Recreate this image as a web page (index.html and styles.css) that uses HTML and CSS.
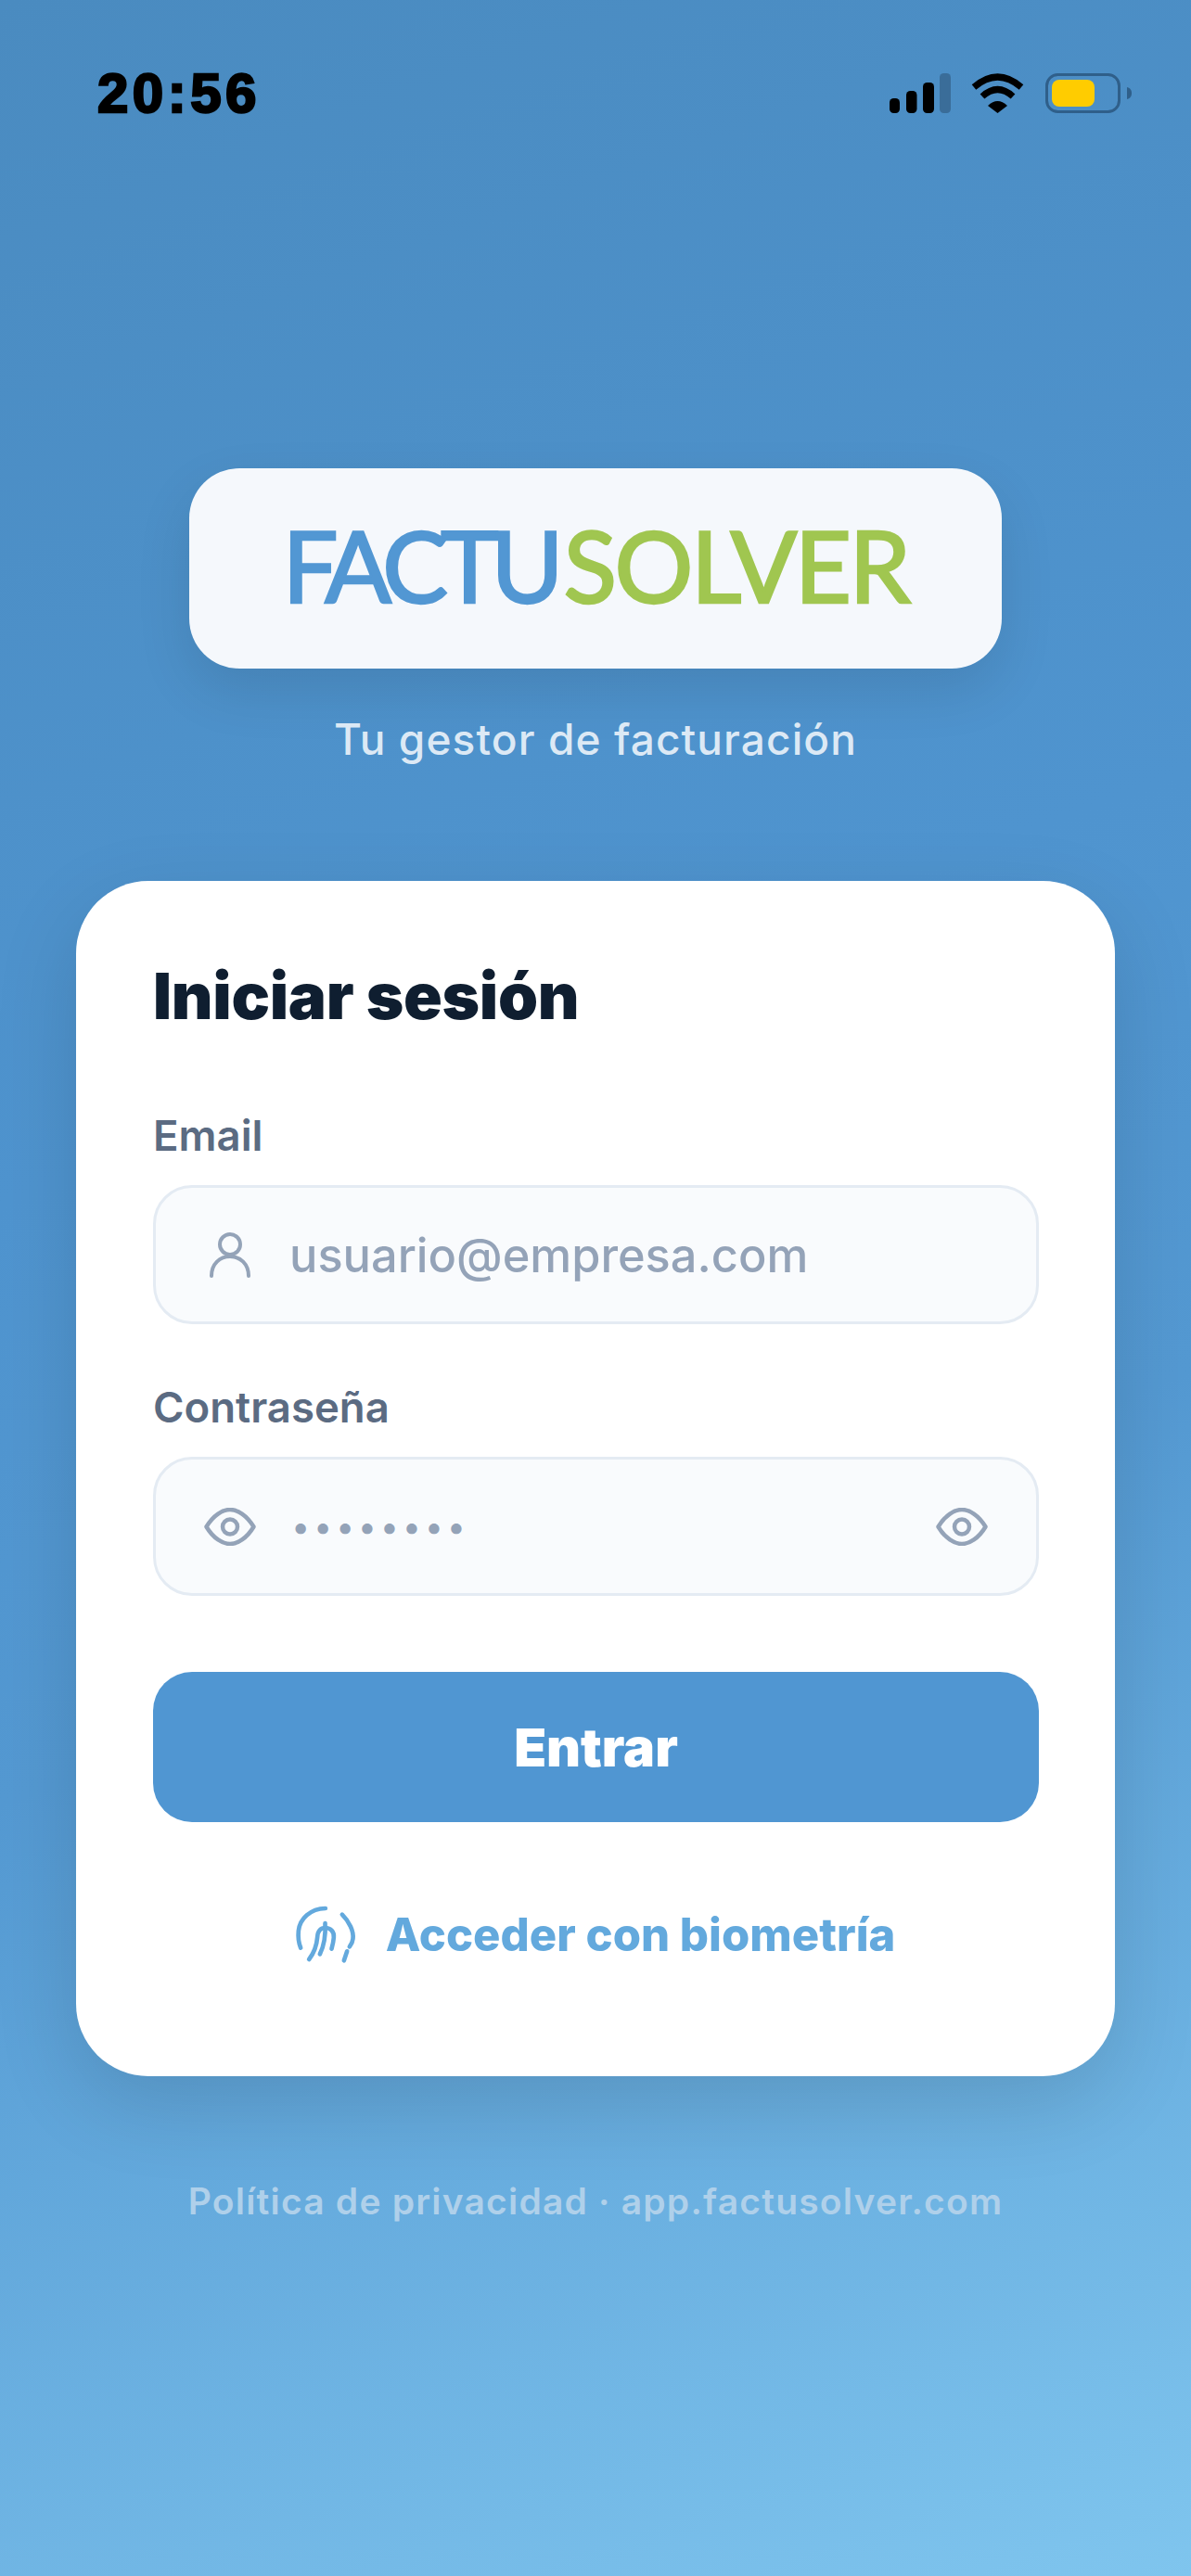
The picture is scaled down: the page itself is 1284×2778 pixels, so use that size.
FILE: index.html
```html
<!DOCTYPE html>
<html lang="es">
<head>
    <meta charset="UTF-8">
    <meta name="viewport" content="width=device-width, initial-scale=1.0">
    <title>FactuSolver</title>
    <link rel="stylesheet" href="styles.css">
</head>
<body>
    <div class="screen">
        <div class="status-bar">
            <span class="time">20:56</span>
            <div class="status-icons">
                <svg width="66" height="43" viewBox="0 0 66 43">
                    <rect x="0" y="27" width="11" height="16" rx="4.5" fill="#000"/>
                    <rect x="18" y="19" width="11.5" height="24" rx="4.5" fill="#000"/>
                    <rect x="36" y="10" width="12" height="33" rx="4.5" fill="#000"/>
                    <rect x="54" y="0" width="12" height="43" rx="4.5" fill="#3a6d99"/>
                </svg>
                <svg class="wifi" width="57" height="43" viewBox="0 0 57 43">
                    <path d="M3 15 Q28.5 -7 54 15" fill="none" stroke="#000" stroke-width="7"/>
                    <path d="M12 25 Q28.5 10 45 25" fill="none" stroke="#000" stroke-width="7"/>
                    <path d="M28.5 43 L18 35 Q28.5 25 39 35 Z" fill="#000"/>
                </svg>
                <svg class="battery" width="93" height="43" viewBox="0 0 93 43">
                    <rect x="1.5" y="1.5" width="78" height="40" rx="12" fill="none" stroke="#2f5f8a" stroke-width="3"/>
                    <rect x="7" y="7" width="46" height="29" rx="8" fill="#ffcc00"/>
                    <path d="M88 15 C92 16 93 19 93 21.5 C93 24 92 27 88 28 Z" fill="#2f5f8a"/>
                </svg>
            </div>
        </div>

        <div class="logo-box">
            <span class="logo-text"><span class="logo-blue">FACTU</span><span class="logo-green">SOLVER</span></span>
        </div>
        <p class="tagline">Tu gestor de facturación</p>

        <div class="card">
            <h1>Iniciar sesión</h1>

            <label class="field-label">Email</label>
            <div class="input-box">
                <span class="input-icon">
                    <svg width="46" height="49" viewBox="0 0 46 49">
                        <circle cx="23" cy="13" r="11" fill="none" stroke="#94a3b8" stroke-width="4"/>
                        <path d="M3 47 C3 34 12 26 23 26 C34 26 43 34 43 47" fill="none" stroke="#94a3b8" stroke-width="4" stroke-linecap="round"/>
                    </svg>
                </span>
                <span class="placeholder">usuario@empresa.com</span>
            </div>

            <label class="field-label second">Contraseña</label>
            <div class="input-box">
                <span class="input-icon">
                    <svg width="56" height="41" viewBox="0 0 56 41">
                        <path d="M2.5 20.5 C10 8 20 2 28 2 C36 2 46 8 53.5 20.5 C46 33 36 39 28 39 C20 39 10 33 2.5 20.5 Z" fill="none" stroke="#94a3b8" stroke-width="4.5" stroke-linejoin="round"/>
                        <circle cx="28" cy="20.5" r="8" fill="none" stroke="#94a3b8" stroke-width="4.5"/>
                    </svg>
                </span>
                <span class="dots">••••••••</span>
                <span class="input-icon right">
                    <svg width="56" height="41" viewBox="0 0 56 41">
                        <path d="M2.5 20.5 C10 8 20 2 28 2 C36 2 46 8 53.5 20.5 C46 33 36 39 28 39 C20 39 10 33 2.5 20.5 Z" fill="none" stroke="#94a3b8" stroke-width="4.5" stroke-linejoin="round"/>
                        <circle cx="28" cy="20.5" r="8" fill="none" stroke="#94a3b8" stroke-width="4.5"/>
                    </svg>
                </span>
            </div>

            <button class="submit-btn" type="button">Entrar</button>

            <div class="biometric">
                <svg width="67" height="64" viewBox="60 45 200 192">
                    <g fill="none" stroke="#63a9dd" stroke-width="14" stroke-linecap="round" stroke-linejoin="round">
                        <path d="M158 57 C110 58 75 90 71 130 C69 150 72 170 78 185"/>
                        <path d="M212 77 C235 100 250 130 247 155 C246 165 243 172 236 181"/>
                        <path d="M228 196 L218 226"/>
                        <path d="M105 222 C122 200 130 175 132 150 C133 130 143 120 157 120 C175 120 187 132 185 152 C184 165 181 177 178 188"/>
                        <path d="M157 105 C159 140 155 175 140 205"/>
                    </g>
                </svg>
                <span>Acceder con biometría</span>
            </div>
        </div>

        <p class="footer-text">Política de privacidad · app.factusolver.com</p>
    </div>
</body>
</html>
```

FILE: styles.css
```css
* {
    box-sizing: border-box;
}
html, body {
    margin: 0;
    padding: 0;
}
body {
    font-family: Inter, "Liberation Sans", sans-serif;
}
.screen {
    width: 1284px;
    height: 2778px;
    overflow: hidden;
    display: flex;
    flex-direction: column;
    align-items: center;
    background: linear-gradient(160deg, #4a8bc0 0%, #4f94cf 40%, #5499d2 60%, #7fc5ee 100%);
}
.status-bar {
    width: 100%;
    height: 160px;
    padding: 79px 64px 0 105px;
    display: flex;
    justify-content: space-between;
    align-items: flex-start;
}
.time {
    font-family: "Liberation Sans", Arial, sans-serif;
    font-weight: 700;
    font-size: 60px;
    line-height: 43px;
    letter-spacing: 4.5px;
    color: #000;
    -webkit-text-stroke: 2.5px #000;
}
.status-icons {
    display: flex;
    align-items: flex-start;
}
.wifi {
    margin-left: 22px;
}
.battery {
    margin-left: 23px;
}
.logo-box {
    width: 876px;
    height: 216px;
    margin-top: 345px;
    display: flex;
    align-items: center;
    justify-content: center;
    padding-bottom: 8px;
    background: #f5f8fc;
    border-radius: 54px;
    box-shadow: 0 24px 60px rgba(0, 0, 0, 0.1);
}
.logo-text {
    font-family: Lato, sans-serif;
    font-size: 106px;
    font-weight: 400;
    line-height: 1;
    -webkit-text-stroke: 2.5px;
}
.logo-blue {
    color: #5297d3;
    letter-spacing: -8px;
}
.logo-green {
    margin-left: 8px;
    color: #a0c650;
    letter-spacing: -2.5px;
}
.tagline {
    margin: 48px 0 0;
    font-size: 46px;
    font-weight: 500;
    line-height: 56px;
    letter-spacing: 1.1px;
    color: #dce9f5;
}
.card {
    width: 1120px;
    height: 1289px;
    margin-top: 125px;
    padding: 84px 82px 0 83px;
    background: #fff;
    border-radius: 78px;
    box-shadow: 0 30px 90px rgba(0, 0, 0, 0.13);
}
h1 {
    margin: 0;
    font-size: 69px;
    font-weight: 900;
    line-height: 80px;
    letter-spacing: -0.3px;
    color: #0f1e30;
}
.field-label {
    display: block;
    margin-top: 85px;
    font-size: 45.5px;
    font-weight: 600;
    line-height: 52px;
    color: #5b6b82;
}
.field-label.second {
    margin-top: 64px;
}
.input-box {
    height: 150px;
    margin-top: 27px;
    padding: 0 52px;
    display: flex;
    align-items: center;
    background: #f9fbfd;
    border: 3px solid #e4ebf3;
    border-radius: 42px;
}
.input-icon {
    width: 56px;
    flex: none;
    display: flex;
    justify-content: center;
}
.input-icon.right {
    margin-left: auto;
}
.placeholder {
    margin-left: 36px;
    font-size: 50.5px;
    font-weight: 500;
    color: #94a3b8;
}
.dots {
    margin-left: 38px;
    font-size: 36px;
    letter-spacing: 3.7px;
    color: #94a3b8;
}
.submit-btn {
    display: block;
    width: 100%;
    height: 162px;
    margin-top: 82px;
    border: none;
    border-radius: 42px;
    background: #5096d2;
    font-family: Inter, sans-serif;
    font-size: 57px;
    font-weight: 900;
    color: #fff;
}
.biometric {
    margin-top: 89px;
    padding-right: 2px;
    display: flex;
    align-items: center;
    justify-content: center;
    gap: 31px;
    font-size: 49px;
    font-weight: 800;
    color: #63a9dd;
}
.footer-text {
    margin: 111px 0 0;
    font-size: 39px;
    font-weight: 600;
    line-height: 48px;
    letter-spacing: 1.2px;
    color: #afd0ea;
}
```
